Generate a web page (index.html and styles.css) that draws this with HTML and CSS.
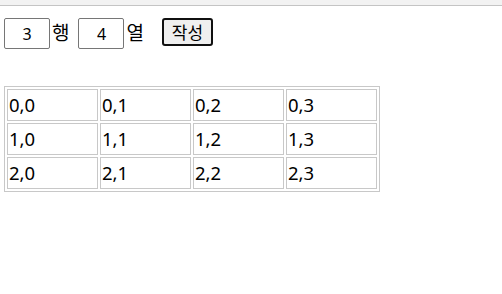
FILE: index.html
```html
<!DOCTYPE html>
<html>
<head>
  <title>표 만들기</title>
  <meta name="viewport" content="width=device-width, initial-scale=1">
  <link rel="stylesheet" href="styles.css">
</head>
<body>
  <div class="topbar"></div>
  <form id="form" class="controls">
    <input type="text" id="rows" class="num" value="3">
    <span class="unit">행</span>
    <input type="text" id="cols" class="num" value="4">
    <span class="unit">열</span>
    <button type="button" id="make">작성</button>
  </form>
  <table id="grid"></table>
  <script>
    const rowsInput = document.querySelector("#rows");
    const colsInput = document.querySelector("#cols");
    const grid = document.querySelector("#grid");

    function makeTable() {
      let rows = parseInt(rowsInput.value) || 0;
      let cols = parseInt(colsInput.value) || 0;
      let html = '';
      for (let i = 0; i < rows; i++) {
        html += '<tr>';
        for (let j = 0; j < cols; j++) {
          html += '<td>' + i + ',' + j + '</td>';
        }
        html += '</tr>';
      }
      grid.innerHTML = html;
    }

    document.querySelector("#make").addEventListener('click', makeTable);
    makeTable();
  </script>
</body>
</html>
```

FILE: styles.css
```css
body {
  font-family: "Noto Sans", "Noto Sans CJK KR", sans-serif;
  margin: 0;
  background-color: #fff;
  color: #000;
}

.topbar {
  height: 5px;
  background-color: #f2f2f2;
  border-bottom: 1px solid #c4c4c4;
}

.controls {
  display: flex;
  align-items: flex-start;
  margin: 12px 0 0 4px;
}

.num {
  box-sizing: border-box;
  width: 46px;
  height: 31px;
  padding: 0;
  border: 1px solid #767676;
  border-radius: 2px;
  text-align: center;
  font-family: "Noto Sans", sans-serif;
  font-size: 16px;
  color: #000;
}

.unit {
  font-family: "Noto Sans CJK KR", sans-serif;
  font-size: 19px;
  line-height: 28px;
  margin: 0 9px 0 2px;
}

#make {
  box-sizing: border-box;
  width: 51px;
  height: 28px;
  margin-left: 9px;
  padding: 0;
  border: 2px solid #101010;
  border-radius: 3px;
  background-color: #efefef;
  font-family: "Noto Sans CJK KR", sans-serif;
  font-size: 17px;
  line-height: 22px;
  color: #000;
}

#grid {
  margin: 37px 0 0 4px;
  border: 1px solid #c8c8c8;
  border-spacing: 2px;
}

#grid td {
  box-sizing: border-box;
  width: 91px;
  height: 32px;
  padding: 0 1px;
  border: 1px solid #c8c8c8;
  font-size: 18.5px;
  line-height: 24px;
}
```
